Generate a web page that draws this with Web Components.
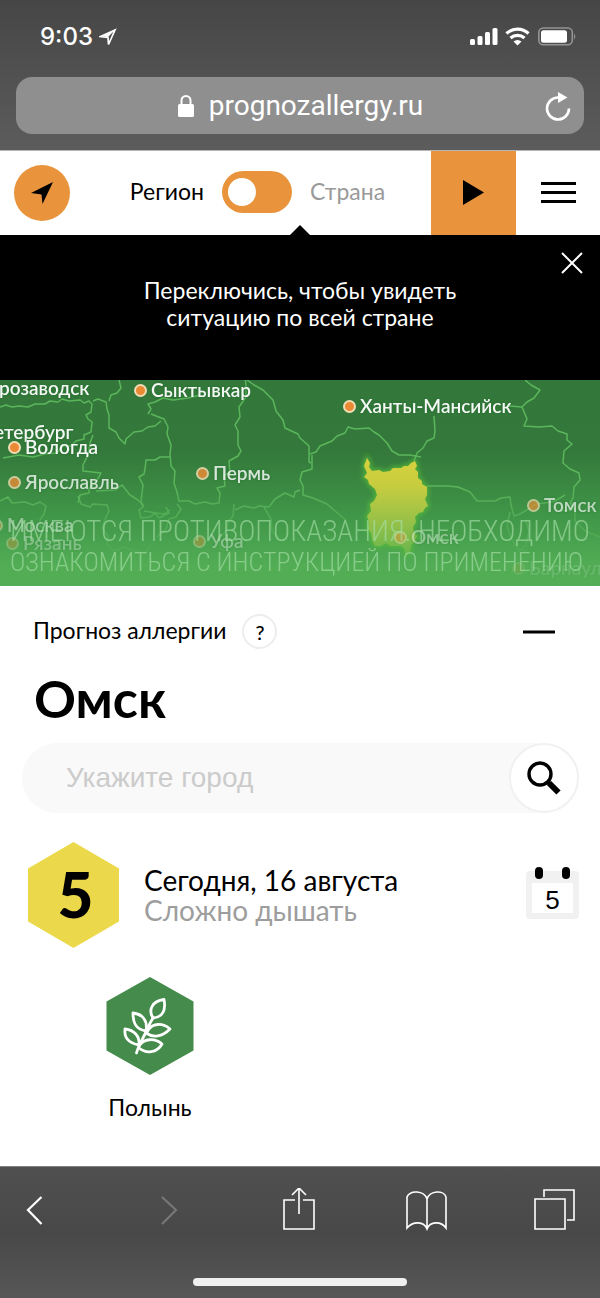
<!DOCTYPE html>
<html lang="ru">
<head>
<meta charset="utf-8">
<meta name="viewport" content="width=device-width, initial-scale=1">
<title>Прогноз аллергии</title>
<style>
  html, body { margin: 0; }
  body { min-height: 100vh; display: flex; flex-direction: column; background: #fff; color: #000; font-family: Lato, "Open Sans", sans-serif; }
  forecast-panel { flex: 1; }
</style>
</head>
<body>
<browser-top></browser-top>
<site-header></site-header>
<hint-banner>Переключись, чтобы увидеть<br>ситуацию по всей стране</hint-banner>
<allergy-map>
  <map-label style="--x:-1px;--y:8px">розаводск</map-label>
  <map-label style="--x:-6px;--y:52px">етербург</map-label>
  <map-pin style="--x:141px;--y:10px">Сыктывкар</map-pin>
  <map-pin style="--x:350px;--y:26px">Ханты-Мансийск</map-pin>
  <map-pin style="--x:15px;--y:67px">Вологда</map-pin>
  <map-pin style="--x:15px;--y:102px;--o:.75">Ярославль</map-pin>
  <map-pin style="--x:203px;--y:93px;--o:.8">Пермь</map-pin>
  <map-pin style="--x:534px;--y:125px;--o:.65">Томск</map-pin>
  <map-pin style="--x:-3px;--y:145px;--o:.45">Москва</map-pin>
  <map-pin style="--x:13px;--y:163px;--o:.3">Рязань</map-pin>
  <map-pin style="--x:200px;--y:161px;--o:.35">Уфа</map-pin>
  <map-pin style="--x:401px;--y:157px;--o:.4">Омск</map-pin>
  <map-pin style="--x:519px;--y:188px;--o:.12">Барнаул</map-pin>
</allergy-map>
<forecast-panel>
  <forecast-day level="5" count="5"><span slot="date">Сегодня, 16 августа</span><span slot="status">Сложно дышать</span></forecast-day>
  <allergen-item>Полынь</allergen-item>
</forecast-panel>
<browser-bottom></browser-bottom>

<script>
const reset = `<style>
  :host { display: block; box-sizing: border-box; }
  *, *::before, *::after { box-sizing: border-box; }
  button { border: 0; padding: 0; margin: 0; background: none; color: inherit; font: inherit; display: flex; align-items: center; justify-content: center; flex: none; }
  svg { display: block; }
</style>`;
function define(name, html) {
  const template = document.createElement('template');
  template.innerHTML = reset + html;
  customElements.define(name, class extends HTMLElement {
    constructor() {
      super();
      this.attachShadow({ mode: 'open' }).append(template.content.cloneNode(true));
    }
    connectedCallback() {
      this.shadowRoot.querySelectorAll('[data-attr]').forEach(el => {
        el.textContent = this.getAttribute(el.dataset.attr);
      });
    }
  });
}

define('browser-top', `<style>
  :host { background: linear-gradient(#464646, #5c5c5c); color: #fff; padding: 0 16px 16px; border-bottom: 1px solid #b5b5b5; }
  .status { height: 77px; padding: 0 8px 4px 24px; display: flex; align-items: center; gap: 6px; }
  time { font: 500 24px/28px Inter, sans-serif; }
  .icons { margin-left: auto; }
  .address { height: 57px; border-radius: 16px; background: #8f8f8f; display: flex; align-items: center; padding: 0 12px 0 42px; }
  .host { flex: 1; display: flex; align-items: center; justify-content: center; gap: 14px; font: 28px/32px Roboto, sans-serif; }
</style>
<div class="status">
  <time>9:03</time>
  <svg width="18" height="18" viewBox="0 0 18 18" aria-hidden="true"><path d="M16 2 1.500 8.500 9 9.500 9.500 16.500Z" fill="none" stroke="#fff" stroke-width="1.700" stroke-linejoin="miter"/><path d="M15 3 3 8.200 9 9Z" fill="#fff"/></svg>
  <svg class="icons" width="108" height="20" viewBox="0 0 108 20" aria-hidden="true">
    <g fill="#fff"><rect x="2" y="12" width="5" height="6" rx="1.500"/><rect x="9.500" y="9" width="5" height="9" rx="1.500"/><rect x="17" y="5" width="5" height="13" rx="1.500"/><rect x="24.500" y="1" width="5" height="17" rx="1.500"/></g>
    <g fill="none" stroke="#fff" stroke-width="3.200"><path d="M38.500 6.500a16 16 0 0 1 22 0"/><path d="M42.500 11a10.500 10.500 0 0 1 14 0"/></g><path d="M45.500 14.500a6 6 0 0 1 8 0l-4 4Z" fill="#fff"/>
    <rect x="70.800" y="1" width="33.500" height="16.800" rx="4.500" fill="none" stroke="#949494" stroke-width="1.600"/><rect x="73" y="3.200" width="26" height="12.500" rx="2.500" fill="#fff"/><path d="M106 6.500q2.500 3 0 6Z" fill="#949494"/>
  </svg>
</div>
<div class="address">
  <div class="host">
    <svg width="18" height="24" viewBox="0 0 18 24" aria-hidden="true"><rect x="1" y="10" width="16" height="13" rx="1.500" fill="#fff"/><path d="M4.500 11V6.500a4.500 4.500 0 0 1 9 0V11" fill="none" stroke="#fff" stroke-width="2"/></svg>
    <span>prognozallergy.ru</span>
  </div>
  <button aria-label="Обновить"><svg width="30" height="30" viewBox="0 0 30 30"><path d="M16 6.500A11 11 0 1 0 27 17.500" fill="none" stroke="#fff" stroke-width="2.600"/><path d="M16 1v11l9.500-5.500Z" fill="#fff"/></svg></button>
</div>`);

define('site-header', `<style>
  :host { background: #fff; }
  header { height: 84px; display: flex; align-items: center; padding-left: 14px; }
  .locate { width: 56px; height: 56px; border-radius: 50%; background: #e9943d; }
  .choice { flex: 1; display: flex; align-items: center; justify-content: center; gap: 18px; font-size: 23px; line-height: 28px; padding: 0 0 4px 14px; }
  .choice label:last-child { color: #9a9a9a; }
  input { appearance: none; margin: 2px 0 0; width: 70px; height: 42px; border-radius: 21px; background: #e9943d; padding: 0 6px; display: flex; align-items: center; flex: none; }
  input::before { content: ""; width: 28px; height: 28px; border-radius: 50%; background: #fff; }
  input:checked { justify-content: flex-end; }
  .play { width: 85px; height: 84px; background: #e9943d; }
  .menu { width: 84px; height: 84px; }
</style>
<header>
  <button class="locate" aria-label="Моё местоположение"><svg width="24" height="24" viewBox="0 0 24 24"><path d="M23 1 1 12l10.500 1.500 1 9.500Z"/></svg></button>
  <div class="choice"><label for="scope">Регион</label><input id="scope" type="checkbox" role="switch"><label for="scope">Страна</label></div>
  <button class="play" aria-label="Воспроизвести"><svg width="22" height="26" viewBox="0 0 22 26"><path d="M0 0v25l21-12.500Z"/></svg></button>
  <button class="menu" aria-label="Меню"><svg width="35" height="22" viewBox="0 0 35 22"><path d="M0 1.500h35M0 10.500h35M0 19.500h35" stroke="#000" stroke-width="3"/></svg></button>
</header>`);

define('hint-banner', `<style>
  :host { position: relative; background: #000; color: #fff; padding: 42px 48px 49px; text-align: center; font-size: 23px; line-height: 27px; }
  :host::before { content: ""; position: absolute; left: 50%; bottom: 100%; margin-left: -10px; border: 10px solid transparent; border-top: 0; border-bottom-color: #000; }
  button { position: absolute; right: 16px; top: 16px; width: 24px; height: 24px; }
</style>
<slot></slot>
<button aria-label="Закрыть"><svg width="24" height="24" viewBox="0 0 24 24"><path d="m2 2 20 20M22 2 2 22" stroke="#fff" stroke-width="2"/></svg></button>`);

define('map-label', `<style>
  :host { position: absolute; left: var(--x); top: var(--y); transform: translateY(-50%); color: #fff; opacity: var(--o, .95); font-weight: 600; font-size: 19px; line-height: 22px; white-space: nowrap; text-shadow: 0 0 3px #236b2d; }
</style><slot></slot>`);
define('map-pin', `<style>
  :host { position: absolute; left: var(--x); top: var(--y); margin-left: -7px; transform: translateY(-50%); display: flex; align-items: center; gap: 4px; color: #fff; opacity: var(--o, .95); font-weight: 600; font-size: 19px; line-height: 22px; white-space: nowrap; text-shadow: 0 0 3px #236b2d; }
  i { width: 13px; height: 13px; border-radius: 50%; background: #f58a34; border: 2px solid #fbe3bd; }
</style><i></i><slot></slot>`);

define('allergy-map', `<style>
  :host { position: relative; overflow: hidden; height: 206px; background: linear-gradient(#33783a 0, #34793b 35%, #419849 68%, #52ad55 90%); }
  svg { position: absolute; inset: 0; width: 100%; height: 100%; }
  p { position: absolute; inset: auto 0 8px 10px; margin: 0; color: #a5dfa6; opacity: .65; font: 300 29px/31px "Roboto Condensed", "Liberation Sans Narrow", Roboto, sans-serif; white-space: nowrap; }
  p span { display: block; }
  p span + span { font-size: 26px; }
</style>
<svg viewBox="0 0 600 206" preserveAspectRatio="xMinYMin slice" aria-hidden="true">
  <defs>
    <linearGradient id="fade" x1="0" y1="0" x2="0" y2="206" gradientUnits="userSpaceOnUse"><stop offset=".5" stop-color="#5ab55b"/><stop offset=".95" stop-color="#5ab55b" stop-opacity=".15"/></linearGradient>
    <linearGradient id="omsk" x1="0" y1="78" x2="0" y2="174" gradientUnits="userSpaceOnUse"><stop stop-color="#d8d13d"/><stop offset=".3" stop-color="#c6cc40"/><stop offset="1" stop-color="#6ab64e"/></linearGradient>
    <filter id="glow" x="-20%" y="-20%" width="140%" height="140%"><feGaussianBlur stdDeviation="2"/></filter>
    <path id="region" d="M367 78L370 83 369 87 372 91 379 90 383 92 390 91 393 88 401 88 404 86 408 86 411 83 415 81 417 86 415 89 418 92 418 98 422 101 422 104 427 107 427 115 425 119 428 126 425 128 423 132 419 133 415 137 416 142 413 147 414 153 417 156 414 162 411 165 410 172 406 175 404 168 401 166 390 166 386 163 381 166 375 166 372 160 371 153 368 149 369 142 367 136 371 131 370 124 374 121 377 115 375 109 369 104 368 100 364 97 367 93 364 86Z"/>
  </defs>
  <g fill="none" stroke="url(#fade)" stroke-width="1.500" stroke-linejoin="round">
    <path d="M0 27l6-2 6 2 7-1 9 1 7-3 10 0 5-3 8 1 4-3 7 2 11-1 4 3 5-2 3 3-1 8-5 3 2 4 4 3-1 10-7 3 0 4-8 2-5 5-8 0-6 7-12 1-12 3-14-2-16 3"/>
    <path d="M93 21l5-2 8 3 1 7 2 6 0 13 7 4 3 6 6 6 1-5 8-7 8-1 6-4 7-1 6-5"/>
    <path d="M119 0l2 8-4 5-6 2-2 6"/><path d="M93 55l-3 8-2 12-5 10 0 6 18 2-5 9-7 6 0 5-9 2-2 8M96 111l20-1 6-5 8 10 8 5 6 6"/>
    <path d="M148 34l3-5-3-5 7-2 8-4 10 2 15-2 12-3"/>
    <path d="M151 34l13 5 4 8-1 7 4 11-1 9 1 12 4 5-1 12 3 9 2 9 10 0 6 3 10-2 7 2 7-1 1-10-3-5 8-2-1-11 6-2-1-12 9-5 3-5-3-6 0-14-3-6 5-8-1-10 7-10 0-11-1-10"/>
    <path d="M170 77l-10 0-5 3-9 0-1 9-1 5-5 3 4 8-1 8-1 8 2 6-4 3 2 8 9-1 5-4 4 5 10-5-3-6M170 130l-6 4-8-1-12-2"/>
    <path d="M247 0l7 5 9 5 10 10 3 11 7 9 2 8 13 6 2 4 9 8 0 16 2 1"/>
    <path d="M310 74l6-2 4-6 12-5 5-5 8-3 3-6 7 2 14-1 5 4 5 3 8 8 5 8 7 4 11 0 11 2"/>
    <path d="M434 36l1 15-1 7-7 3-4 7-6 5-3 8M312 75l0 14-10 3-2 8 3 6 0 9 10 3 14 6 8 7 11 9"/>
    <path d="M427 106l8 0 13 0 10 1 12 5 7 9 9 0 9 0 6-3 9-1 1 8 3 11 6-2 10-6 6-4 9-1 10-2 10-6"/>
    <path d="M525 0l6 5 9 5-6 8-7 4-5 5-12-1-5 2M522 27l5 12-3 7 15 1 13-1 6 5 9 3 0 6 5 4-8 7-1 12 7 6 9 4 1 7-6 7-1 11-3 5 3 6-12 2"/>
    <path d="M0 121l8-4 4 6 13-1 8 3 7-3 6 4-2 8-4 6 0 6 7 5 0 9 9 4 3 10 10 4M78 116l3 8 9 3 3-3 14 1 2 6-3 6-4 11 6 8-1 9 7 6 11-4 9 4 10 3 7-9"/>
    <path d="M177 124l4 5-5 8-7 2-3 10-9 8M234 124l-1 12-5 6-1 8-8 8 2 11 13 4M264 127l7 12 1 12 7 7M300 110l-5 2-1 5-9-4-10 6-6 8-10-1-5 2-10-2-9 4"/>
    <path d="M510 132l-3 14 4 12 6 10 9 3M571 122l4 9 0 10 10 10 15 6M526 141l3 10-3 14-8 7"/>
  </g>
  <use href="#region" fill="#58bd37" stroke="#58bd37" stroke-width="4" filter="url(#glow)" opacity=".7"/>
  <use href="#region" fill="url(#omsk)"/>
</svg>
<slot></slot>
<p><span>ИМЕЮТСЯ ПРОТИВОПОКАЗАНИЯ. НЕОБХОДИМО</span><span>ОЗНАКОМИТЬСЯ С ИНСТРУКЦИЕЙ ПО ПРИМЕНЕНИЮ</span></p>`);

define('forecast-panel', `<style>
  :host { background: #fff; padding: 28px 21px 24px 22px; }
  .title { display: flex; align-items: center; padding: 0 20px 0 11px; height: 35px; }
  h2 { margin: 0; padding-bottom: 4px; font-weight: 400; font-size: 23px; line-height: 28px; }
  .help { margin-left: 16px; width: 35px; height: 35px; border: 2px solid #ededed; border-radius: 50%; font-weight: 500; font-size: 20px; }
  .fold { margin-left: auto; width: 40px; height: 32px; }
  h1 { margin: 18px 12px 14px; font-weight: 700; font-size: 52px; line-height: 62px; }
  form { display: flex; height: 70px; border-radius: 35px; background: #f9f9f9; margin-bottom: 29px; }
  input { flex: 1; min-width: 0; border: 0; outline: 0; background: none; padding: 0 0 0 44px; font: 28px/32px "Liberation Sans", sans-serif; }
  input::placeholder { color: #cbcbcb; opacity: 1; }
  .find { width: 70px; height: 70px; border-radius: 50%; border: 2px solid #f1f1f1; background: #fff; }
</style>
<div class="title"><h2>Прогноз аллергии</h2><button class="help" aria-label="Справка">?</button>
<button class="fold" aria-label="Свернуть"><svg width="32" height="4" viewBox="0 0 32 4"><path d="M0 2h32" stroke="#000" stroke-width="3"/></svg></button></div>
<h1>Омск</h1>
<form><input type="text" placeholder="Укажите город" aria-label="Укажите город">
<button type="button" class="find" aria-label="Найти"><svg width="34" height="34" viewBox="0 0 34 34"><circle cx="13" cy="13" r="11" fill="none" stroke="#000" stroke-width="3.400"/><path d="m20 20 3.500 3.500" stroke="#000" stroke-width="4"/><path d="m22 22 9.500 9.500" stroke="#000" stroke-width="6"/></svg></button></form>
<slot></slot>`);

define('forecast-day', `<style>
  :host { display: flex; align-items: center; height: 106px; padding-left: 6px; margin-bottom: 29px; }
  .level { width: 91px; height: 106px; background: #ecd94b; clip-path: polygon(50% 0, 100% 25%, 100% 75%, 50% 100%, 0 75%, 0 25%); display: flex; align-items: center; justify-content: center; font-weight: 900; font-size: 62px; line-height: 76px; padding: 0 0 2px 4px; flex: none; }
  .text { flex: 1; margin-left: 25px; font-size: 28px; line-height: 30px; }
  .status { color: #9d9d9d; }
  .cal { position: relative; width: 53px; height: 48px; border: 6px solid #f1f1f1; border-top-width: 12px; border-radius: 4px; background: #fff; padding-top: 4px; font: 26px/28px "Liberation Sans", sans-serif; }
  .cal::before, .cal::after { content: ""; position: absolute; top: -16px; width: 8px; height: 12px; border-radius: 4px; background: #000; }
  .cal::before { left: 3px; } .cal::after { right: 3px; }
</style>
<div class="level" data-attr="level"></div>
<div class="text"><div><slot name="date"></slot></div><div class="status"><slot name="status"></slot></div></div>
<button class="cal" data-attr="count" aria-label="Календарь"></button>`);

define('allergen-item', `<style>
  :host { display: flex; flex-direction: column; align-items: center; width: 88px; margin-left: 84px; gap: 18px; font-size: 23px; line-height: 28px; }
</style>
<svg width="88" height="98" viewBox="0 0 88 98" aria-hidden="true"><path d="M44 0 87.500 24.500v49L44 98 .5 73.500v-49Z" fill="#458b4c"/>
<g fill="none" stroke="#fff" stroke-width="2.800" stroke-linecap="round" stroke-linejoin="round"><path d="M30.500 76C32 70 36 63 39 57 42 51 43 47 47 41"/><path d="M47 41C42 33 46 24 58 22.500 60 33 57 40 47 41Z"/><path d="M40 54C29 52 27 45 27 36 36 37 42 43 40 54Z"/><path d="M41 55C46 45 57 46 64 52 56 60 47 61 40 56"/><path d="M33 68C22 66 18 60 19 52 28 53 34 59 33 68Z"/><path d="M33 69C38 61 49 61 56 67 51 76 40 77 33 71"/></g></svg>
<slot></slot>`);

define('browser-bottom', `<style>
  :host { background: linear-gradient(#505050, #484848 50%, #575757); border-top: 1px solid #808080; height: 132px; padding: 21px 23px 0 13px; display: flex; flex-direction: column; align-items: stretch; }
  nav { display: flex; justify-content: space-between; }
  button { width: 44px; height: 44px; }
  path { fill: none; stroke: #fff; stroke-width: 1.600; }
  .bar { align-self: center; width: 214px; height: 8px; border-radius: 4px; background: #efefef; margin: 46px 0 0 10px; }
</style>
<nav>
  <button aria-label="Назад"><svg width="44" height="44" viewBox="0 0 44 44"><path d="M28.500 9 15 22l13.500 14" style="stroke-width:2.200"/></svg></button>
  <button aria-label="Вперёд" disabled><svg width="44" height="44" viewBox="0 0 44 44"><path d="M19 9l14 13-14 14" style="stroke-width:2.200;stroke:#777"/></svg></button>
  <button aria-label="Поделиться"><svg width="44" height="44" viewBox="0 0 44 44"><path d="M22 12H11v29h30V12H30M26 26V0M19 7l7-7 7 7"/></svg></button>
  <button aria-label="Закладки"><svg width="44" height="44" viewBox="0 0 44 44"><path d="M24 41V11C21 2 7 2 4 9v31c6-7 17-7 20 1 3-8 14-8 19-1V9C41 2 27 2 24 11"/></svg></button>
  <button aria-label="Вкладки"><svg width="44" height="44" viewBox="0 0 44 44"><path d="M2 11h30v30H2ZM11 9V2h30v30h-7"/></svg></button>
</nav>
<div class="bar"></div>`);
</script>
</body>
</html>
